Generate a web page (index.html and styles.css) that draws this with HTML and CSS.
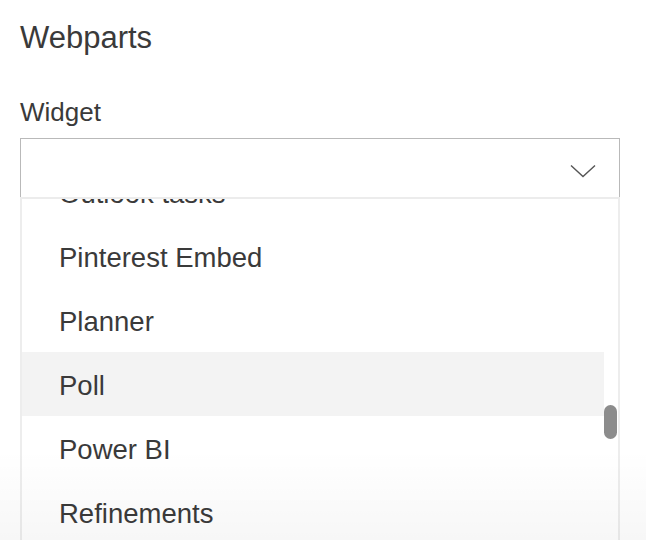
FILE: index.html
```html
<!DOCTYPE html>
<html>
<head>
<meta charset="utf-8">
<link rel="stylesheet" href="styles.css">
</head>
<body>
<div class="panel">
  <h1 class="title">Webparts</h1>
  <label class="label">Widget</label>
  <div class="select">
    <svg class="chevron" width="26" height="14" viewBox="0 0 26 14"><path d="M1 1.5 L13 12.5 L25 1.5" fill="none" stroke="#555" stroke-width="1.4"/></svg>
  </div>
  <div class="dropdown">
    <ul class="options">
      <li class="option">Outlook tasks</li>
      <li class="option">Pinterest Embed</li>
      <li class="option">Planner</li>
      <li class="option hover">Poll</li>
      <li class="option">Power BI</li>
      <li class="option">Refinements</li>
    </ul>
    <div class="thumb"></div>
  </div>
  <div class="fade"></div>
</div>
</body>
</html>
```
FILE: styles.css
```css
html, body {
  margin: 0;
  padding: 0;
  background: #ffffff;
  height: 540px;
  overflow: hidden;
}
.panel {
  position: relative;
  height: 540px;
  padding: 20px 26px 0 20px;
  font-family: "Liberation Sans", Arial, sans-serif;
  color: #3a3a3a;
  overflow: hidden;
}
.title {
  margin: 0;
  font-size: 31px;
  font-weight: normal;
  line-height: 36px;
}
.label {
  display: block;
  margin-top: 41px;
  font-size: 26px;
  line-height: 30px;
}
.select {
  margin-top: 11px;
  height: 60px;
  border: 1px solid #b9b9b9;
  border-bottom: none;
  display: flex;
  justify-content: flex-end;
  align-items: center;
  padding-right: 23px;
  box-sizing: border-box;
}
.chevron {
  display: block;
  margin-top: 4px;
}
.dropdown {
  position: relative;
  height: 360px;
  overflow: hidden;
  background: #ffffff;
  border-top: 2px solid #ececec;
  border-left: 2px solid #ededed;
  border-right: 2px solid #ededed;
  margin-top: -1px;
  box-sizing: border-box;
}
.options {
  list-style: none;
  margin: -39px 14px 0 0;
  padding: 0;
}
.option {
  box-sizing: border-box;
  height: 64px;
  padding-top: 4px;
  line-height: 60px;
  padding-left: 37px;
  font-size: 27.5px;
  color: #3a3a3a;
  white-space: nowrap;
}
.option.hover {
  background: #f3f3f3;
}
.thumb {
  position: absolute;
  right: 1px;
  top: 206px;
  width: 13px;
  height: 34px;
  border-radius: 7px;
  background: #8c8c8c;
}
.fade {
  position: absolute;
  left: 0;
  right: 0;
  bottom: 0;
  height: 110px;
  background: linear-gradient(to bottom, rgba(0,0,0,0), rgba(0,0,0,0.04));
  pointer-events: none;
}
```
